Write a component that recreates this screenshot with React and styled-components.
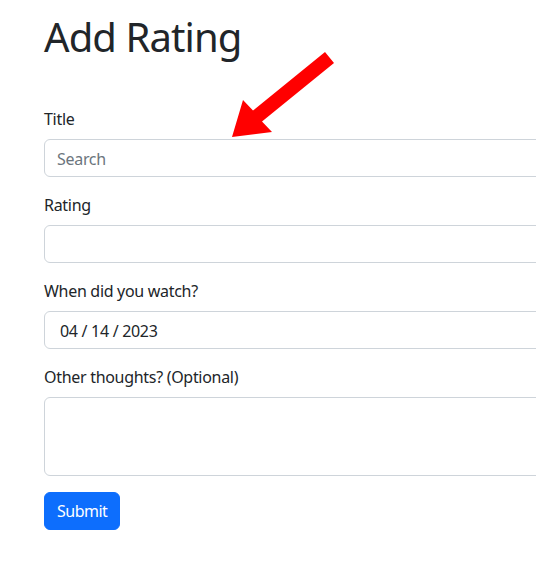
import React from 'react';
import styled, { createGlobalStyle } from 'styled-components';

const GlobalStyle = createGlobalStyle`
  html, body {
    margin: 0;
    padding: 0;
    overflow: hidden;
    background: #fff;
  }
  body {
    font-family: 'Noto Sans', 'Open Sans', sans-serif;
    font-size: 16px;
    line-height: 1.5;
    letter-spacing: -0.3px;
    color: #212529;
  }
  * { box-sizing: border-box; }
`;

const Page = styled.div`
  position: relative;
  width: 760px;
  padding: 12px 0 0 44px;
`;

const Heading = styled.h1`
  margin: 1px 0 46px;
  font-size: 40px;
  font-weight: 400;
  line-height: 1.2;
  letter-spacing: -0.9px;
`;

const Form = styled.form`
  display: flex;
  flex-direction: column;
`;

const Group = styled.div`
  display: flex;
  flex-direction: column;
  margin-bottom: 16px;
`;

const Label = styled.label`
  margin-bottom: 8px;
  padding-top: 1px;
  font-size: 16px;
  line-height: 23px;
`;

const Input = styled.input`
  display: block;
  width: 100%;
  height: 38px;
  padding: 7px ${({ $pad }) => $pad || 12}px 5px;
  font: inherit;
  letter-spacing: inherit;
  color: #212529;
  background: #fff;
  border: 1px solid #ced4da;
  border-radius: 6px;
  outline: none;

  &::placeholder {
    color: #6c757d;
  }
`;

const TextArea = styled.textarea`
  display: block;
  width: 100%;
  height: 79px;
  padding: 6px 12px;
  font: inherit;
  border: 1px solid #ced4da;
  border-radius: 6px;
  resize: none;
  outline: none;
`;

const SubmitButton = styled.button`
  align-self: flex-start;
  height: 38px;
  padding: 6px 12px;
  font: inherit;
  letter-spacing: -0.5px;
  color: #fff;
  background: #0d6efd;
  border: 1px solid #0d6efd;
  border-radius: 6px;
  cursor: pointer;
`;

const Arrow = styled.svg`
  position: absolute;
  left: 0;
  top: 0;
  pointer-events: none;
`;

export default function App() {
  return (
    <Page>
      <GlobalStyle />
      <Heading>Add Rating</Heading>
      <Form onSubmit={(e) => e.preventDefault()}>
        <Group>
          <Label>Title</Label>
          <Input type="text" placeholder="Search" />
        </Group>
        <Group>
          <Label>Rating</Label>
          <Input type="text" />
        </Group>
        <Group>
          <Label>When did you watch?</Label>
          <Input type="text" $pad={15} defaultValue="04 / 14 / 2023" />
        </Group>
        <Group>
          <Label>Other thoughts? (Optional)</Label>
          <TextArea />
        </Group>
        <SubmitButton type="submit">Submit</SubmitButton>
      </Form>
      <Arrow width="536" height="576" viewBox="0 0 536 576">
        <polygon
          fill="#ff0000"
          points="232,137 243,100 253,110.6 325,52 334,63 262,121.4 272,132"
        />
      </Arrow>
    </Page>
  );
}
